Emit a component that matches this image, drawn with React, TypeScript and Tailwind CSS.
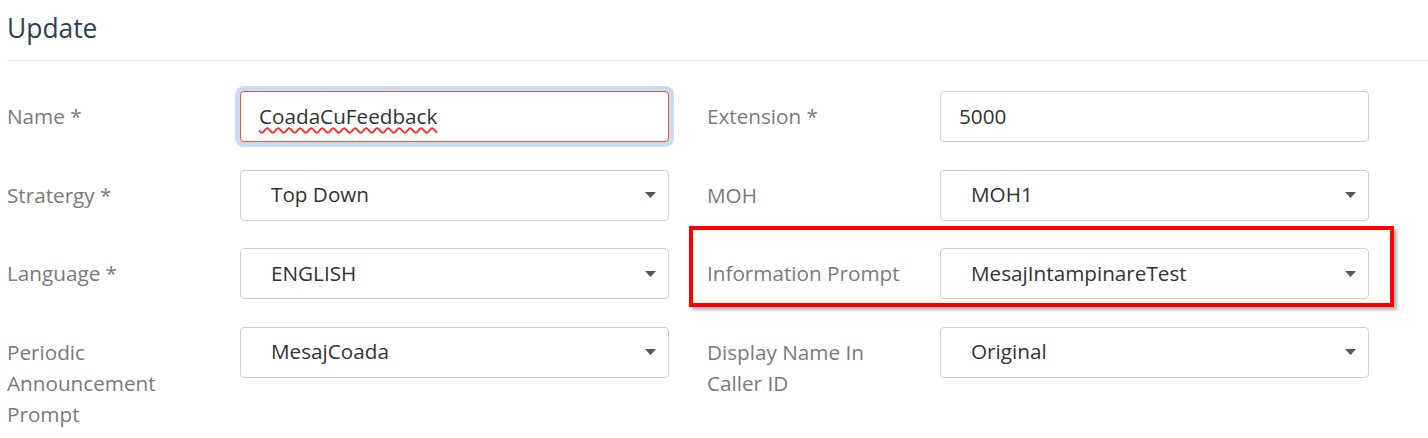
import React from "react";

function Arrow() {
  return (
    <svg width="11" height="6" viewBox="0 0 11 6" className="shrink-0">
      <path d="M0 0 H11 L5.5 6 Z" fill="#5b5353" />
    </svg>
  );
}

function Label({ children }: { children: React.ReactNode }) {
  return (
    <div className="w-[233px] shrink-0 pr-[30px] pt-[10px] text-[20.7px] leading-[31px] text-[#7a7a7a]">
      {children}
    </div>
  );
}

function SelectBox({ value }: { value: string }) {
  return (
    <div className="w-[429px] h-[51px] rounded-[4px] border border-[#cfcfcf] bg-white flex items-center pl-[30px] pr-[12px]">
      <span className="flex-1 text-[20.7px] text-[#333]">{value}</span>
      <Arrow />
    </div>
  );
}

function InputBox({ value, focused }: { value: React.ReactNode; focused?: boolean }) {
  return (
    <div
      className={
        focused
          ? "w-[429px] h-[51px] rounded-[4px] border border-[#f2552c] bg-white flex items-center pl-[18px] shadow-[0_0_0_5px_#c6dbf8]"
          : "w-[429px] h-[51px] rounded-[4px] border border-[#cfcfcf] bg-white flex items-center pl-[18px]"
      }
    >
      <span className="text-[20.7px] text-[#333]">{value}</span>
    </div>
  );
}

export default function App() {
  return (
    <div className="w-[1428px] h-[438px] bg-white overflow-hidden font-['Open_Sans',sans-serif]">
      <div className="pl-[7px] pt-[10px]">
        <h1 className="text-[26.4px] leading-[36px] text-[#2c3e50]">Update</h1>
      </div>
      <div className="ml-[7px] mt-[14px] h-px bg-[#e8e8e8]" />
      <div className="relative pl-[7px] pt-[30px] grid grid-cols-[662px_662px] gap-x-[38px] gap-y-[27.5px]">
        <div className="flex items-start">
          <Label>Name *</Label>
          <InputBox
            focused
            value={
              <span className="underline decoration-wavy decoration-[#ff2a2a] decoration-[1.5px] underline-offset-[3px]">
                CoadaCuFeedback
              </span>
            }
          />
        </div>
        <div className="flex items-start">
          <Label>Extension *</Label>
          <InputBox value="5000" />
        </div>
        <div className="flex items-start">
          <Label>Stratergy *</Label>
          <SelectBox value="Top Down" />
        </div>
        <div className="flex items-start">
          <Label>MOH</Label>
          <SelectBox value="MOH1" />
        </div>
        <div className="flex items-start">
          <Label>Language *</Label>
          <SelectBox value="ENGLISH" />
        </div>
        <div className="flex items-start">
          <Label>Information Prompt</Label>
          <SelectBox value="MesajIntampinareTest" />
        </div>
        <div className="flex items-start">
          <Label>Periodic Announcement Prompt</Label>
          <SelectBox value="MesajCoada" />
        </div>
        <div className="flex items-start">
          <Label>Display Name In Caller ID</Label>
          <SelectBox value="Original" />
        </div>
        <div className="pointer-events-none absolute left-[689px] top-[165px] w-[705px] h-[81px] border-4 border-[#ff0000] shadow-[3px_3px_3px_rgba(0,0,0,0.3)]" />
      </div>
    </div>
  );
}
